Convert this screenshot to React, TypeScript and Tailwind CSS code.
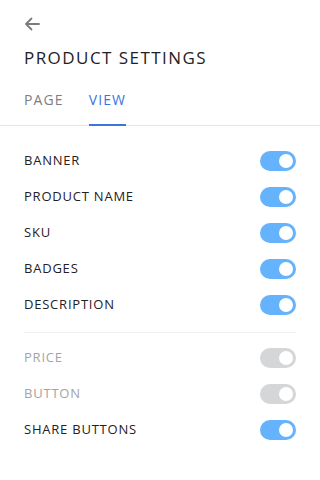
import React from "react";

function Toggle({ on }: { on: boolean }) {
  return (
    <div
      className={
        "flex h-[20px] w-[36px] items-center justify-end rounded-full pr-[3px] " +
        (on ? "bg-[#64b3fc]" : "bg-[#d5d6d8]")
      }
    >
      <div className="h-[14px] w-[14px] rounded-full bg-white" />
    </div>
  );
}

function Row({ label, on, disabled }: { label: string; on: boolean; disabled?: boolean }) {
  return (
    <div className="flex h-[36px] items-center justify-between">
      <span
        className={
          "text-[13px] tracking-[0.06em] " +
          (disabled ? "text-[#a3a4a6]" : "text-[#1f2124]")
        }
      >
        {label}
      </span>
      <Toggle on={on && !disabled ? true : false} />
    </div>
  );
}

export default function App() {
  return (
    <div
      className="flex h-[480px] w-[320px] flex-col bg-white"
      style={{ fontFamily: "'Open Sans', 'Liberation Sans', sans-serif" }}
    >
      <div className="px-6 pt-[17px]">
        <svg width="16" height="14" viewBox="0 0 16 14" fill="none">
          <path d="M15 7H2M7.5 1.5L2 7l5.5 5.5" stroke="#7b7c7e" strokeWidth="1.8" strokeLinecap="round" strokeLinejoin="round" />
        </svg>
        <h1 className="mt-[15px] text-[17px] font-medium leading-[24px] tracking-[0.085em] text-[#1f2124]">
          PRODUCT SETTINGS
        </h1>
      </div>
      <div className="mt-[21px] flex gap-[25px] border-b border-[#e6e7e8] px-6">
        <div className="pb-[16px] text-[14px] font-medium leading-[18px] tracking-[0.08em] text-[#7d7e80]">PAGE</div>
        <div className="-mb-px border-b-2 border-[#3b75de] pb-[15px] text-[14px] font-medium leading-[18px] tracking-[0.08em] text-[#3b75de]">
          VIEW
        </div>
      </div>
      <div className="px-6 pt-[17px]">
        <Row label="BANNER" on />
        <Row label="PRODUCT NAME" on />
        <Row label="SKU" on />
        <Row label="BADGES" on />
        <Row label="DESCRIPTION" on />
        <div className="mt-[9px] mb-[7px] h-px bg-[#eeeff0]" />
        <Row label="PRICE" on={false} disabled />
        <Row label="BUTTON" on={false} disabled />
        <Row label="SHARE BUTTONS" on />
      </div>
    </div>
  );
}
